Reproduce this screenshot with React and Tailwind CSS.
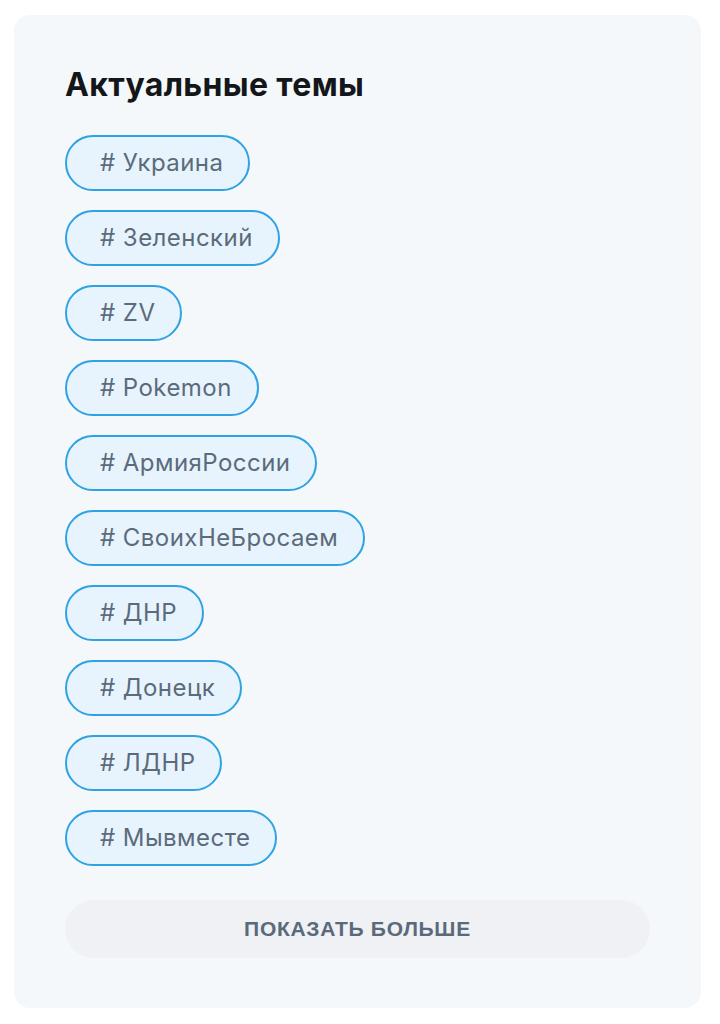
import React from "react";

const topics = [
    "Украина",
    "Зеленский",
    "ZV",
    "Pokemon",
    "АрмияРоссии",
    "СвоихНеБросаем",
    "ДНР",
    "Донецк",
    "ЛДНР",
    "Мывместе",
];

export default function App() {
    return (
        <div className="w-[720px] h-[1024px] bg-white pt-[15px] pl-[14px] pr-[19px]" style={{ fontFamily: "Inter, 'Noto Sans', sans-serif" }}>
            <div className="bg-[#f4f8fb] rounded-[16px] h-[993px] px-[51px] pt-[50px]">
                <h2 className="text-[32px] leading-[40px] font-bold text-[#14171a] tracking-[0.35px]">Актуальные темы</h2>

                <div className="mt-[30px] flex flex-col items-start gap-[19px]">
                    {topics.map((t) => (
                        <a
                            key={t}
                            href="#"
                            className="h-[56px] flex items-center pl-[33px] pr-[25px] rounded-full border-2 border-[#2ea2e3] bg-[#e8f4fd] text-[24px] tracking-[0.45px] text-[#5b6b7c]"
                        >
                            # {t}
                        </a>
                    ))}
                </div>

                <button className="mt-[34px] w-full h-[58px] rounded-full bg-[#eff1f5] text-[21px] font-bold uppercase tracking-[0.7px] text-[#5a6a7b]" style={{ fontFamily: "'Liberation Sans', Arial, sans-serif" }}>
                    Показать больше
                </button>
            </div>
        </div>
    );
}
